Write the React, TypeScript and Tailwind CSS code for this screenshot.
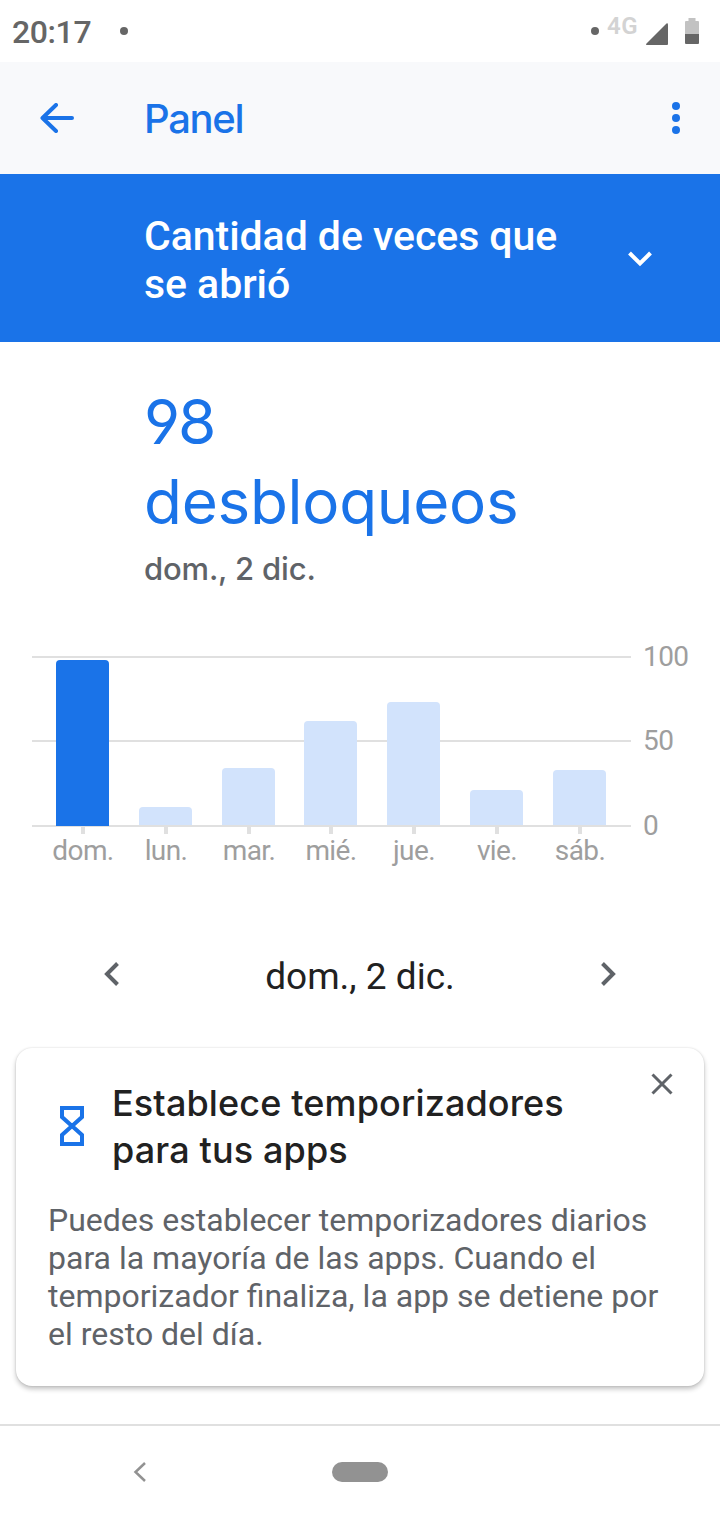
interface Day {
    label: string;
    x: number;
    top: number;
    selected?: boolean;
}

const DAYS: Day[] = [
    { label: 'dom.', x: 56, top: 660, selected: true },
    { label: 'lun.', x: 139, top: 807 },
    { label: 'mar.', x: 222, top: 768 },
    { label: 'mié.', x: 304, top: 721 },
    { label: 'jue.', x: 387, top: 702 },
    { label: 'vie.', x: 470, top: 790 },
    { label: 'sáb.', x: 553, top: 770 },
];

const GRID = [
    { value: 100, y: 656 },
    { value: 50, y: 740 },
    { value: 0, y: 825 },
];

// bar with only the top corners rounded
function barPath(x: number, top: number, bottom: number) {
    const r = 4;
    return `M${x} ${bottom}V${top + r}q0-${r} ${r}-${r}h${53 - r * 2}q${r} 0 ${r} ${r}V${bottom}z`;
}

function StatusBar() {
    return (
        <div className="flex h-[62px] items-center justify-between bg-white text-[#666666]">
            <div className="flex items-center pl-3">
                <span className="w-[108px] pt-0.5 text-[32px] leading-[60px] font-medium tracking-[-0.4px]">20:17</span>
                <span className="size-2 rounded-full bg-[#666666]" />
            </div>
            <div className="flex items-center pr-[21px]">
                <span className="-mt-px size-2 rounded-full bg-[#666666]" />
                <span className="ml-2 w-[39px] pb-[11px] text-[24px] leading-[24px] font-semibold tracking-[0.5px] text-[#d3d3d3]">4G</span>
                <svg width="22" height="22" viewBox="0 0 22 22" className="mt-[6px]">
                    <path d="M20.500 .4Q22 0 22 1.500V21q0 1-1 1H1Q-.5 22 .5 20.600z" fill="#666666" />
                </svg>
                <svg width="14" height="26" viewBox="0 0 14 26" className="ml-[17px]">
                    <path d="M3.500 0h7v3H13q1 0 1 1v12H0V4q0-1 1-1h2.500z" fill="#c2c2c2" />
                    <path d="M0 16h14v9q0 1-1 1H1q-1 0-1-1z" fill="#666666" />
                </svg>
            </div>
        </div>
    );
}

function AppBar() {
    return (
        <header className="flex h-28 items-center bg-[#f8f9fb] text-[#1a73e8]">
            <button className="ml-10 w-[104px]" aria-label="Atrás">
                <svg width="34" height="30" viewBox="0 0 34 30" fill="none" stroke="currentColor" strokeWidth="4" strokeLinecap="round" strokeLinejoin="round">
                    <path d="M32 15H2.500M16 2L2.500 15L16 28" />
                </svg>
            </button>
            <h1 className="flex-1 pt-px font-[Inter,sans-serif] text-[40px] leading-[56px] font-medium tracking-[-1.3px]">Panel</h1>
            <button className="mr-10 flex flex-col gap-1" aria-label="Más opciones">
                <span className="size-2 rounded-full bg-[#1a73e8]" />
                <span className="size-2 rounded-full bg-[#1a73e8]" />
                <span className="size-2 rounded-full bg-[#1a73e8]" />
            </button>
        </header>
    );
}

function MetricPicker() {
    return (
        <div className="flex h-[168px] items-center bg-[#1a73e8] pl-36 text-white">
            <div className="w-[484px] pt-1 text-[41px] leading-[48px] font-medium tracking-[-0.05px]">
                Cantidad de veces que
                <br />
                se abrió
            </div>
            <svg width="24" height="16" viewBox="0 0 24 16" fill="none" stroke="currentColor" strokeWidth="4" className="mt-px">
                <path d="M1.500 2L12 12.500L22.500 2" />
            </svg>
        </div>
    );
}

function UsageChart() {
    return (
        <svg width="720" height="240" viewBox="0 640 720 240" className="block" fontSize="28" fill="#9e9e9e">
            {GRID.map((line) => (
                <g key={line.value}>
                    <rect x="32" y={line.y} width="599" height="2" fill="#e0e0e0" />
                    <text x="643" y={line.y + 10} letterSpacing="-0.6">{line.value}</text>
                </g>
            ))}
            {DAYS.map((day) => (
                <g key={day.label}>
                    <rect x={day.x + 25} y="827" width="4" height="7" fill="#e0e0e0" />
                    <path d={barPath(day.x, day.top, day.selected ? 826 : 825)} fill={day.selected ? '#1a73e8' : '#d2e3fc'} />
                    <text x={day.x + 27} y="860" textAnchor="middle" letterSpacing="-0.6">{day.label}</text>
                </g>
            ))}
        </svg>
    );
}

function DateSwitcher() {
    return (
        <div className="flex h-[80px] items-center justify-between px-[104px] text-[#5f6368]">
            <svg width="16" height="24" viewBox="0 0 16 24" fill="none" stroke="currentColor" strokeWidth="4">
                <path d="M13.500 1.500L3 12L13.500 22.500" />
            </svg>
            <span className="pt-1.5 text-[37px] leading-[48px] text-[#212121]">dom., 2 dic.</span>
            <svg width="16" height="24" viewBox="0 0 16 24" fill="none" stroke="currentColor" strokeWidth="4">
                <path d="M2.500 1.500L13 12L2.500 22.500" />
            </svg>
        </div>
    );
}

function TimerCard() {
    return (
        <section className="mx-4 h-[338px] rounded-2xl bg-white shadow-[0_3px_5px_rgba(0,0,0,0.24),0_0_2px_rgba(0,0,0,0.14)]">
            <div className="flex h-[134px] items-start pt-8">
                <svg width="24" height="40" viewBox="0 0 24 40" fill="none" stroke="#1a73e8" strokeWidth="4" className="mt-[26px] ml-11">
                    <path d="M2 2H22V11L12 20L2 11ZM2 38H22V29L12 20L2 29Z" />
                </svg>
                <h2 className="ml-[28px] w-[539px] font-[Inter,sans-serif] text-[36px] leading-[47px] font-medium tracking-[0.13px] text-[#212121]">
                    Establece temporizadores
                    <br />
                    para tus apps
                </h2>
                <svg width="22" height="22" viewBox="0 0 22 22" stroke="#5f6368" strokeWidth="3" className="-mt-[7px]">
                    <path d="M1.500 1.500L20.500 20.500M20.500 1.500L1.500 20.500" />
                </svg>
            </div>
            <p className="mt-[19px] pl-8 text-[32px] leading-[38px] text-[#5f6368]">
                Puedes establecer temporizadores diarios
                <br />
                para la mayoría de las apps. Cuando el
                <br />
                temporizador finaliza, la app se detiene por
                <br />
                el resto del día.
            </p>
        </section>
    );
}

function NavigationBar() {
    return (
        <nav className="mt-[38px] flex h-24 items-center border-t-2 border-[#e0e0e0] pb-0.5 pl-[133px]">
            <svg width="13" height="20" viewBox="0 0 13 20" fill="none" stroke="#929292" strokeWidth="2.500">
                <path d="M12 1L2.500 10L12 19" />
            </svg>
            <span className="ml-[186px] h-5 w-14 rounded-full bg-[#929292]" />
        </nav>
    );
}

export default function App() {
    return (
        <main className="h-[1520px] w-[720px] overflow-hidden bg-white font-[Roboto,sans-serif]">
            <StatusBar />
            <AppBar />
            <MetricPicker />
            <div className="h-[298px] pt-10 pl-36 font-[Inter,sans-serif]">
                <div className="text-[62px] leading-[80px] text-[#1a73e8] [font-feature-settings:'ss01']">
                    <span className="tracking-[-2px]">98</span>
                    <br />
                    <span className="tracking-[-0.3px]">desbloqueos</span>
                </div>
                <div className="mt-[5px] text-[31px] leading-[44px] font-medium tracking-[-0.18px] text-[#5f6368]">dom., 2 dic.</div>
            </div>
            <UsageChart />
            <div className="h-[54px]" />
            <DateSwitcher />
            <div className="h-[34px]" />
            <TimerCard />
            <NavigationBar />
        </main>
    );
}
